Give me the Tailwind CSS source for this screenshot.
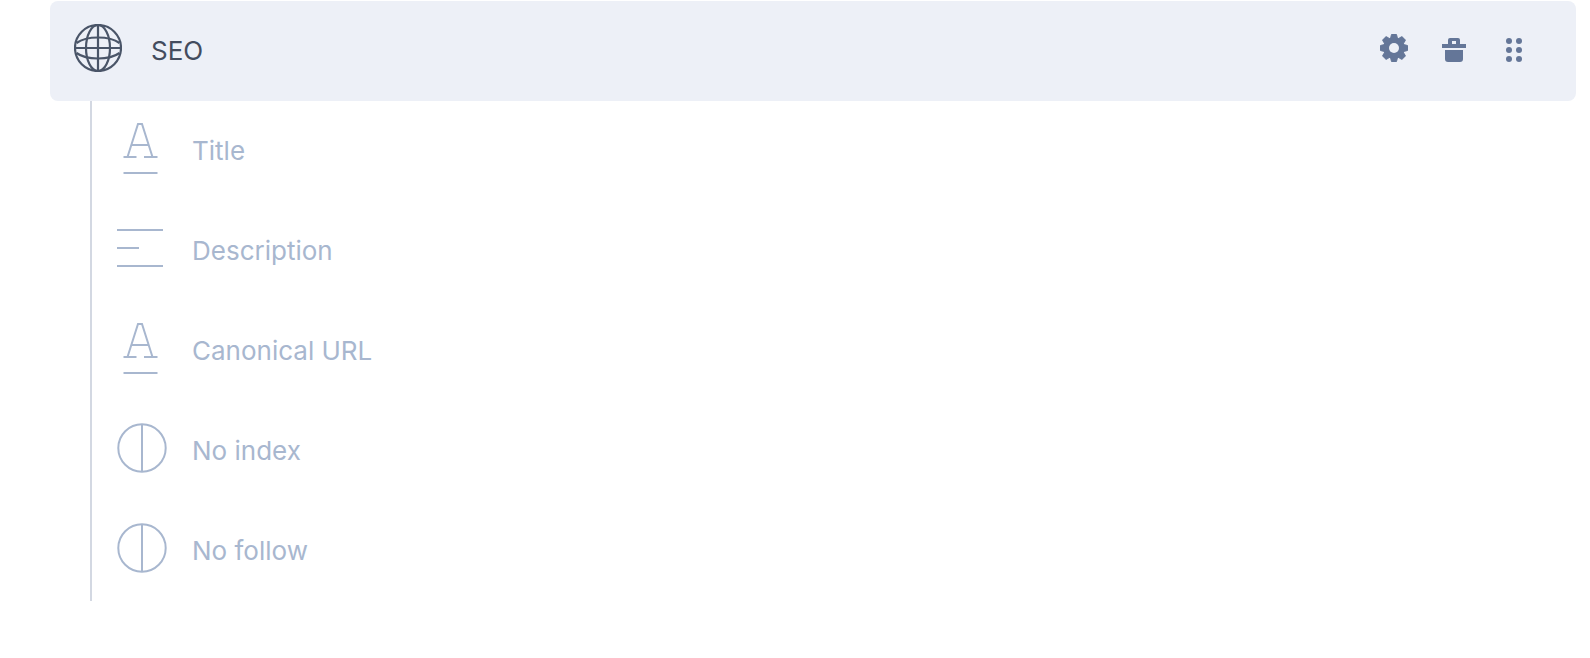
<!DOCTYPE html>
<html lang="en">
<head>
    <meta charset="UTF-8">
    <title>SEO</title>
    <script src="https://cdn.jsdelivr.net/npm/@tailwindcss/browser@4"></script>
</head>
<body class="bg-white font-['Inter',sans-serif] overflow-hidden">
    <div class="pl-[50px] pr-[14px] pt-px">
        <!-- Group header -->
        <div class="flex items-center h-[100px] bg-[#edf0f7] rounded-lg pl-[24px] pr-[47px]">
            <svg class="w-[48px] h-[48px] -mt-[6px] shrink-0" viewBox="0 0 48 48" fill="none" stroke="#4a5568" stroke-width="2.200">
                <circle cx="24" cy="24" r="23"/>
                <ellipse cx="24" cy="24" rx="12" ry="23"/>
                <path d="M24 1v46M1 24h46"/>
                <path d="M2.500 19C8 15 15.500 13.500 24 13.500S40 15 45.500 19M2.500 29C8 33 15.500 34.500 24 34.500S40 33 45.500 29"/>
            </svg>
            <span class="ml-[29px] pb-[2px] text-[26px] text-[#434c5e]">SEO</span>
            <div class="ml-auto flex items-center gap-[30px] -mt-[6px]">
                <svg class="w-[30px] h-[30px]" viewBox="0 0 30 30" fill="#647698">
                    <circle cx="15" cy="15" r="10.500"/>
                    <g stroke="#647698" stroke-width="1" stroke-linejoin="round">
                        <path d="M12.500 1.500h5l1.500 6h-8z"/>
                        <path d="M12.500 1.500h5l1.500 6h-8z" transform="rotate(45 15 15)"/>
                        <path d="M12.500 1.500h5l1.500 6h-8z" transform="rotate(90 15 15)"/>
                        <path d="M12.500 1.500h5l1.500 6h-8z" transform="rotate(135 15 15)"/>
                        <path d="M12.500 1.500h5l1.500 6h-8z" transform="rotate(180 15 15)"/>
                        <path d="M12.500 1.500h5l1.500 6h-8z" transform="rotate(225 15 15)"/>
                        <path d="M12.500 1.500h5l1.500 6h-8z" transform="rotate(270 15 15)"/>
                        <path d="M12.500 1.500h5l1.500 6h-8z" transform="rotate(315 15 15)"/>
                    </g>
                    <circle cx="15" cy="15" r="5" fill="#edf0f7"/>
                </svg>
                <svg class="w-[30px] h-[30px]" viewBox="0 0 30 30" fill="#647698">
                    <path fill-rule="evenodd" d="M9 11V7a2 2 0 0 1 2-2h8a2 2 0 0 1 2 2v4zM13 8v3h4V8z"/>
                    <rect x="3" y="11" width="24" height="4"/>
                    <path d="M6 17h18v9a3 3 0 0 1-3 3H9a3 3 0 0 1-3-3z"/>
                </svg>
                <svg class="w-[30px] h-[30px]" viewBox="0 0 30 30" fill="#647698">
                    <circle cx="10" cy="8" r="3"/><circle cx="20" cy="8" r="3"/>
                    <circle cx="10" cy="17" r="3"/><circle cx="20" cy="17" r="3"/>
                    <circle cx="10" cy="26" r="3"/><circle cx="20" cy="26" r="3"/>
                </svg>
            </div>
        </div>

        <!-- Fields -->
        <ul class="ml-[40px] border-l-2 border-[#d3d8e2] text-[26px] text-[#a8b7cf]">
            <li class="flex items-center h-[100px] pl-[25px]">
                <svg class="w-[50px] h-[50px] shrink-0 -mt-[6px] overflow-visible" viewBox="0 0 50 50" fill="none" stroke="#a8b7cf" stroke-width="2">
                    <path d="M6.500 34h13M27 34h13.500M10.500 34L21 1h4L35.500 34M14 22h18M6.500 50h34"/>
                </svg>
                <span class="ml-[25px] pb-[2px]">Title</span>
            </li>
            <li class="flex items-center h-[100px] pl-[25px]">
                <svg class="w-[50px] h-[50px] shrink-0 -mt-[6px]" viewBox="0 0 50 50" fill="none" stroke="#a8b7cf" stroke-width="2">
                    <path d="M0 7h46M0 25h22M0 43h46"/>
                </svg>
                <span class="ml-[25px] pb-[2px]">Description</span>
            </li>
            <li class="flex items-center h-[100px] pl-[25px]">
                <svg class="w-[50px] h-[50px] shrink-0 -mt-[6px] overflow-visible" viewBox="0 0 50 50" fill="none" stroke="#a8b7cf" stroke-width="2">
                    <path d="M6.500 34h13M27 34h13.500M10.500 34L21 1h4L35.500 34M14 22h18M6.500 50h34"/>
                </svg>
                <span class="ml-[25px] pb-[2px]">Canonical URL</span>
            </li>
            <li class="flex items-center h-[100px] pl-[25px]">
                <svg class="w-[50px] h-[50px] shrink-0 -mt-[6px]" viewBox="0 0 50 50" fill="none" stroke="#a8b7cf" stroke-width="2">
                    <circle cx="25" cy="25" r="23.700"/><path d="M25 1v48"/>
                </svg>
                <span class="ml-[25px] pb-[2px]">No index</span>
            </li>
            <li class="flex items-center h-[100px] pl-[25px]">
                <svg class="w-[50px] h-[50px] shrink-0 -mt-[6px]" viewBox="0 0 50 50" fill="none" stroke="#a8b7cf" stroke-width="2">
                    <circle cx="25" cy="25" r="23.700"/><path d="M25 1v48"/>
                </svg>
                <span class="ml-[25px] pb-[2px]">No follow</span>
            </li>
        </ul>
    </div>
</body>
</html>
